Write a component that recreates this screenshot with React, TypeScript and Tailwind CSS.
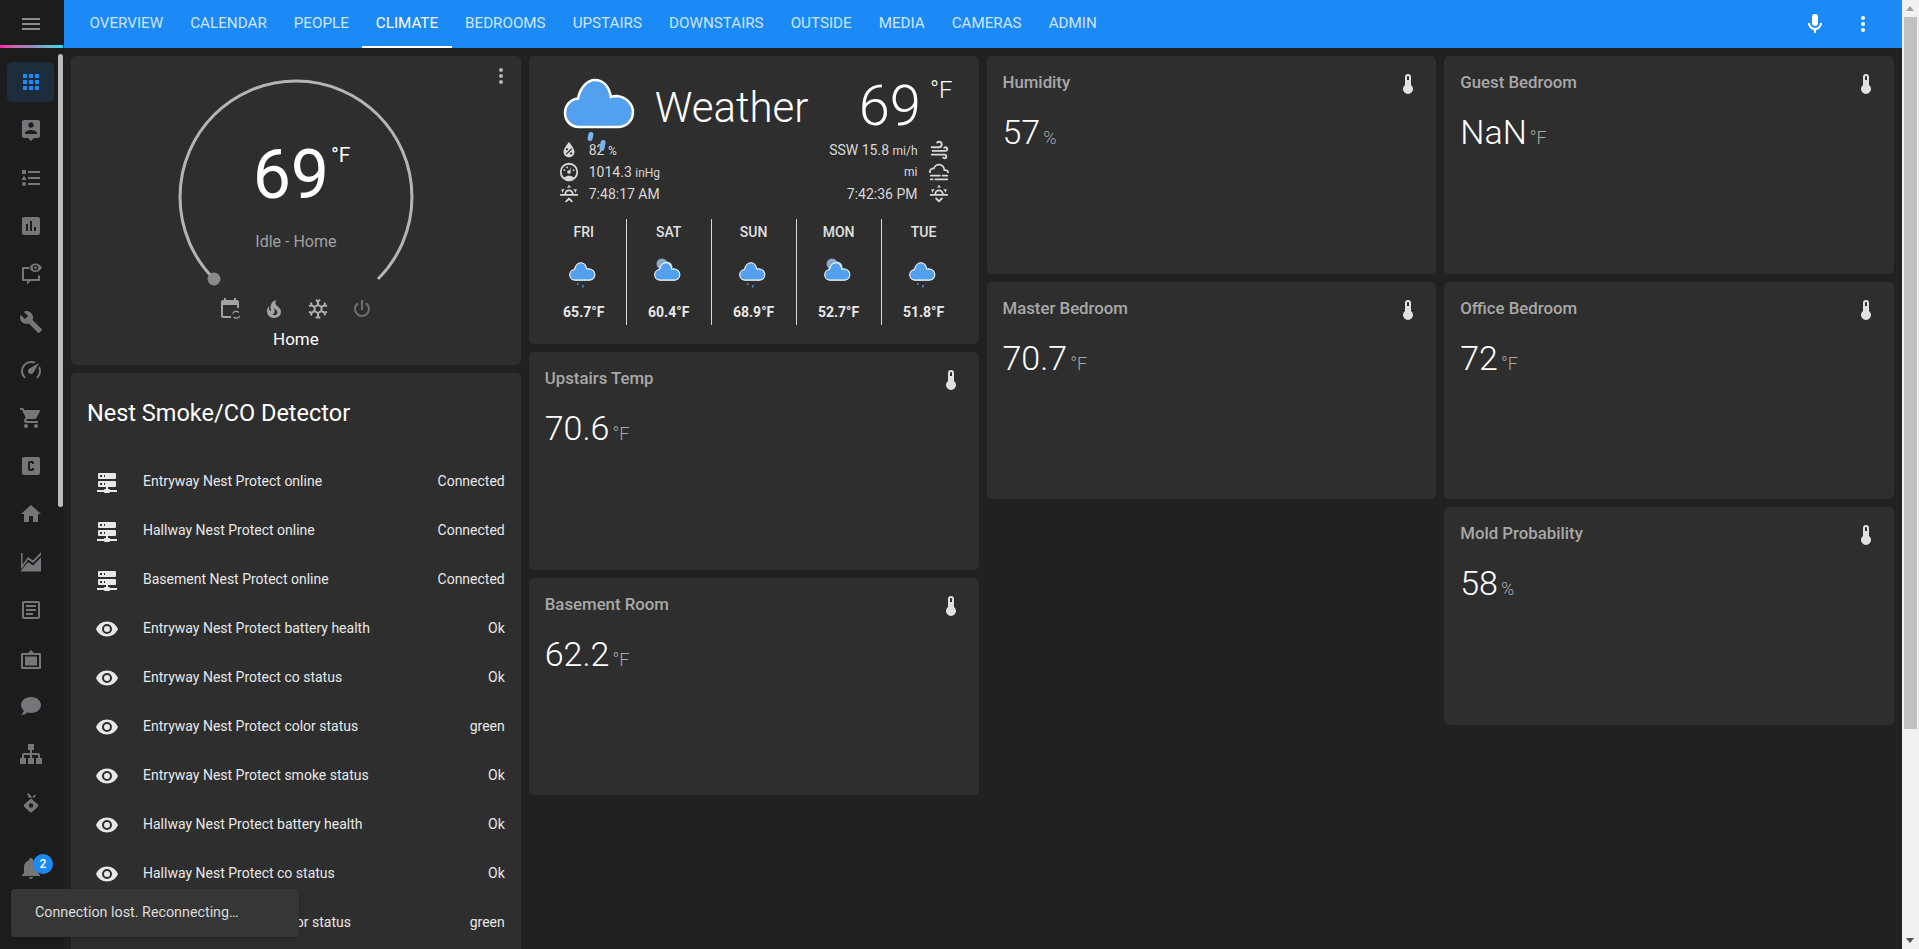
import React from 'react'

// Home Assistant climate dashboard
const P = {
  menu: 'M3,6H21V8H3V6M3,11H21V13H3V11M3,16H21V18H3V16Z',
  mic: 'M12,2A3,3 0 0,1 15,5V11A3,3 0 0,1 12,14A3,3 0 0,1 9,11V5A3,3 0 0,1 12,2M19,11C19,14.53 16.39,17.44 13,17.93V21H11V17.93C7.61,17.44 5,14.53 5,11H7A5,5 0 0,0 12,16A5,5 0 0,0 17,11H19Z',
  dots: 'M12,16A2,2 0 0,1 14,18A2,2 0 0,1 12,20A2,2 0 0,1 10,18A2,2 0 0,1 12,16M12,10A2,2 0 0,1 14,12A2,2 0 0,1 12,14A2,2 0 0,1 10,12A2,2 0 0,1 12,10M12,4A2,2 0 0,1 14,6A2,2 0 0,1 12,8A2,2 0 0,1 10,6A2,2 0 0,1 12,4Z',
  apps: 'M16,20H20V16H16M16,14H20V10H16M10,8H14V4H10M16,8H20V4H16M10,14H14V10H10M4,14H8V10H4M4,20H8V16H4M10,20H14V16H10M4,8H8V4H4V8Z',
  pin: 'M19 2H5C3.9 2 3 2.9 3 4V18C3 19.1 3.9 20 5 20H9L12 23L15 20H19C20.1 20 21 19.1 21 18V4C21 2.9 20.1 2 19 2M12 4.3C13.5 4.3 14.7 5.5 14.7 7C14.7 8.5 13.5 9.7 12 9.7C10.5 9.7 9.3 8.5 9.3 7C9.3 5.5 10.5 4.3 12 4.3M18 16H6V15.1C6 13.1 10 12 12 12C14 12 18 13.1 18 15.1V16Z',
  list: 'M5,9.5L7.5,14H2.5L5,9.5M3,4H7V8H3V4M5,20A2,2 0 0,0 7,18A2,2 0 0,0 5,16A2,2 0 0,0 3,18A2,2 0 0,0 5,20M9,5V7H21V5H9M9,19H21V17H9V19M9,13H21V11H9V13Z',
  poll: 'M17,17H15V13H17M13,17H11V7H13M9,17H7V10H9M19,3H5C3.89,3 3,3.89 3,5V19A2,2 0 0,0 5,21H19A2,2 0 0,0 21,19V5C21,3.89 20.1,3 19,3Z',
  msgEye: 'M11.5 5H4a1 1 0 0 0-1 1v12a1 1 0 0 0 1 1h4v3.5l3.5-3.5H20a1 1 0 0 0 1-1v-4.500h-2V17h-8.300L10 17.700V17H5V7h6.500zM16.500 1.500C13.600 1.500 11.300 3.300 10.200 5.800c1.100 2.500 3.400 4.300 6.300 4.300s5.200-1.800 6.300-4.300c-1.100-2.500-3.400-4.300-6.300-4.300zm0 1.600a2.700 2.700 0 1 1 0 5.400 2.700 2.700 0 0 1 0-5.400zm0 1.300a1.400 1.400 0 1 0 0 2.800 1.400 1.400 0 0 0 0-2.800z',
  wrench: 'M22.7,19L13.6,9.9C14.5,7.6 14,4.9 12.1,3C10.1,1 7.1,0.6 4.7,1.7L9,6L6,9L1.6,4.7C0.4,7.1 0.9,10.1 2.9,12.1C4.8,14 7.5,14.5 9.8,13.6L18.9,22.7C19.3,23.1 19.9,23.1 20.3,22.7L22.6,20.4C23.1,20 23.1,19.3 22.7,19Z',
  speed: 'M12,16A3,3 0 0,1 9,13C9,11.88 9.61,10.9 10.5,10.39L20.21,4.77L14.68,14.35C14.18,15.33 13.17,16 12,16M12,3C13.81,3 15.5,3.5 16.97,4.32L14.87,5.53C14,5.19 13,5 12,5A8,8 0 0,0 4,13C4,15.21 4.89,17.21 6.34,18.65H6.35C6.74,19.04 6.74,19.67 6.35,20.06C5.96,20.45 5.32,20.45 4.93,20.07V20.07C3.12,18.26 2,15.76 2,13A10,10 0 0,1 12,3M22,13C22,15.76 20.88,18.26 19.07,20.07V20.07C18.68,20.45 18.05,20.45 17.66,20.06C17.27,19.67 17.27,19.04 17.66,18.65V18.65C19.11,17.2 20,15.21 20,13C20,12 19.81,11 19.46,10.1L20.68,8C21.5,9.5 22,11.18 22,13Z',
  cart: 'M17,18C15.89,18 15,18.89 15,20A2,2 0 0,0 17,22A2,2 0 0,0 19,20C19,18.89 18.1,18 17,18M1,2V4H3L6.6,11.59L5.24,14.04C5.09,14.32 5,14.65 5,15A2,2 0 0,0 7,17H19V15H7.42A0.25,0.25 0 0,1 7.17,14.75C7.17,14.7 7.18,14.66 7.2,14.63L8.1,13H15.55C16.3,13 16.96,12.58 17.3,11.97L20.88,5.5C20.95,5.34 21,5.17 21,5A1,1 0 0,0 20,4H5.21L4.27,2M7,18C5.89,18 5,18.89 5,20A2,2 0 0,0 7,22A2,2 0 0,0 9,20C9,18.89 8.1,18 7,18Z',
  cbox: 'M5,3H19A2,2 0 0,1 21,5V19A2,2 0 0,1 19,21H5A2,2 0 0,1 3,19V5A2,2 0 0,1 5,3ZM11,7A2,2 0 0,0 9,9V15A2,2 0 0,0 11,17H13A2,2 0 0,0 15,15V14H13V15H11V9H13V10H15V9A2,2 0 0,0 13,7H11Z',
  home: 'M10,20V14H14V20H19V12H22L12,3L2,12H5V20H10Z',
  area: 'M2 3h1.500v11.500L9 7l5 3.500L22 2v3l-8 8-5-3.500-5.500 8L2 19zM2 21.500V20.500L9 12l5 3.500 8-8v14z',
  text: 'M5,3C3.89,3 3,3.89 3,5V19C3,20.11 3.89,21 5,21H19C20.11,21 21,20.11 21,19V5C21,3.89 20.11,3 19,3H5M5,5H19V19H5V5M7,7V9H17V7H7M7,11V13H17V11H7M7,15V17H14V15H7Z',
  tv: 'M3 7h6l3-3 3 3h6a1 1 0 0 1 1 1v14a1 1 0 0 1-1 1H3a1 1 0 0 1-1-1V8a1 1 0 0 1 1-1zM4 9v12h16V9zM6 10.500h12v9H6z',
  chat: 'M12,3C17.5,3 22,6.58 22,11C22,15.42 17.5,19 12,19C10.76,19 9.57,18.82 8.47,18.5C5.55,21 2,21 2,21C4.33,18.67 4.7,17.1 4.75,16.5C3.05,15.07 2,13.13 2,11C2,6.58 6.5,3 12,3Z',
  sitemap: 'M9,2V8H11V11H5C3.89,11 3,11.89 3,13V16H1V22H7V16H5V13H11V16H9V22H15V16H13V13H19V16H17V22H23V16H21V13C21,11.89 20.11,11 19,11H13V8H15V2H9Z',
  ornament: 'M12 8.500L18.500 14a2 2 0 0 1 0 3L13.200 22a2 2 0 0 1-2.400 0L5.500 17a2 2 0 0 1 0-3zM12 13.300a2.200 2.200 0 1 0 0 4.400 2.200 2.200 0 0 0 0-4.400zM8 2.500L12 5.500 13 8 9.500 7.500zM13.500 7c.4-1.200 1.400-2 3.500-2.300-.2 1.700-1.200 2.800-3 3z',
  bell: 'M21,19V20H3V19L5,17V11C5,7.9 7.03,5.17 10,4.29C10,4.19 10,4.1 10,4A2,2 0 0,1 12,2A2,2 0 0,1 14,4C14,4.1 14,4.19 14,4.29C16.97,5.17 19,7.9 19,11V17L21,19M14,21A2,2 0 0,1 12,23A2,2 0 0,1 10,21',
  thermo: 'M15 13V5A3 3 0 0 0 9 5V13A5 5 0 1 0 15 13M12 4A1 1 0 0 1 13 5V8H11V5A1 1 0 0 1 12 4Z',
  calendar: 'M19 3h-1V1h-2v2H8V1H6v2H5C3.9 3 3 3.9 3 5v14c0 1.100.9 2 2 2h8v-2H5V8h14v3h2V5c0-1.100-.9-2-2-2z',
  fire: 'M17.66 11.2C17.43 10.9 17.15 10.64 16.89 10.38C16.22 9.78 15.46 9.35 14.82 8.72C13.33 7.26 13 4.85 13.95 3C13 3.23 12.17 3.75 11.46 4.32C8.87 6.4 7.85 10.07 9.07 13.22C9.11 13.32 9.15 13.42 9.15 13.55C9.15 13.77 9 13.97 8.8 14.05C8.57 14.15 8.33 14.09 8.14 13.93C8.08 13.88 8.04 13.83 8 13.76C6.87 12.33 6.69 10.28 7.45 8.64C5.78 10 4.87 12.3 5 14.47C5.06 14.97 5.12 15.47 5.29 15.97C5.43 16.57 5.7 17.17 6 17.7C7.08 19.43 8.95 20.67 10.96 20.92C13.1 21.19 15.39 20.8 17.03 19.32C18.86 17.66 19.5 15 18.56 12.72L18.43 12.46C18.22 12 17.66 11.2 17.66 11.2M14.5 17.5C14.22 17.74 13.76 18 13.4 18.1C12.28 18.5 11.16 17.94 10.5 17.28C11.69 17 12.4 16.12 12.61 15.23C12.78 14.43 12.46 13.77 12.33 13C12.21 12.26 12.23 11.63 12.5 10.94C12.69 11.32 12.89 11.7 13.13 12C13.9 13 15.11 13.44 15.37 14.8C15.41 14.94 15.43 15.08 15.43 15.23C15.46 16.05 15.1 16.95 14.5 17.5H14.5Z',
  snow: 'M20.79,13.95L18.46,14.57L16.46,13.44V10.56L18.46,9.43L20.79,10.05L21.31,8.12L19.54,7.65L20,5.88L18.07,5.36L17.45,7.69L15.45,8.82L13,7.38V5.12L14.71,3.41L13.29,2L12,3.29L10.71,2L9.29,3.41L11,5.12V7.38L8.5,8.82L6.5,7.69L5.92,5.36L4,5.88L4.47,7.65L2.7,8.12L3.22,10.05L5.55,9.43L7.55,10.56V13.45L5.55,14.58L3.22,13.96L2.7,15.89L4.47,16.36L4,18.12L5.93,18.64L6.55,16.31L8.55,15.18L11,16.62V18.88L9.29,20.59L10.71,22L12,20.71L13.29,22L14.7,20.59L13,18.88V16.62L15.5,15.17L17.5,16.3L18.12,18.63L20,18.12L19.53,16.35L21.3,15.88L20.79,13.95M9.5,10.56L12,9.11L14.5,10.56V13.44L12,14.89L9.5,13.44V10.56Z',
  power: 'M16.56,5.44L15.11,6.89C16.84,7.94 18,9.83 18,12A6,6 0 0,1 12,18A6,6 0 0,1 6,12C6,9.83 7.16,7.94 8.88,6.88L7.44,5.44C5.36,6.88 4,9.28 4,12A8,8 0 0,0 12,20A8,8 0 0,0 20,12C20,9.28 18.64,6.88 16.56,5.44M13,3H11V13H13',
  server: 'M13,19H14A1,1 0 0,1 15,20H22V22H15A1,1 0 0,1 14,23H10A1,1 0 0,1 9,22H2V20H9A1,1 0 0,1 10,19H11V17H4A1,1 0 0,1 3,16V12A1,1 0 0,1 4,11H20A1,1 0 0,1 21,12V16A1,1 0 0,1 20,17H13V19M4,3H20A1,1 0 0,1 21,4V8A1,1 0 0,1 20,9H4A1,1 0 0,1 3,8V4A1,1 0 0,1 4,3M9,7H10V5H9V7M9,15H10V13H9V15M5,5V7H7V5H5M5,13V15H7V13H5Z',
  eye: 'M12,9A3,3 0 0,0 9,12A3,3 0 0,0 12,15A3,3 0 0,0 15,12A3,3 0 0,0 12,9M12,17A5,5 0 0,1 7,12A5,5 0 0,1 12,7A5,5 0 0,1 17,12A5,5 0 0,1 12,17M12,4.5C7,4.5 2.73,7.61 1,12C2.73,16.39 7,19.5 12,19.5C17,19.5 21.27,16.39 23,12C21.27,7.61 17,4.5 12,4.5Z',
  water: 'M12,3.25C12,3.25 6,10 6,14C6,17.32 8.69,20 12,20A6,6 0 0,0 18,14C18,10 12,3.25 12,3.25M14.47,9.97L15.53,11.03L9.53,17.03L8.47,15.97M9.75,10A1.25,1.25 0 0,1 11,11.25A1.25,1.25 0 0,1 9.75,12.5A1.25,1.25 0 0,1 8.5,11.25A1.25,1.25 0 0,1 9.75,10M14.25,14.5A1.25,1.25 0 0,1 15.5,15.75A1.25,1.25 0 0,1 14.25,17A1.25,1.25 0 0,1 13,15.75A1.25,1.25 0 0,1 14.25,14.5Z',
  gauge: 'M17.3,18C19,16.5 20,14.4 20,12A8,8 0 0,0 12,4A8,8 0 0,0 4,12C4,14.4 5,16.5 6.7,18C8.2,16.7 10,16 12,16C14,16 15.9,16.7 17.3,18M12,2A10,10 0 0,1 22,12A10,10 0 0,1 12,22A10,10 0 0,1 2,12A10,10 0 0,1 12,2M7,9A1,1 0 0,1 8,10A1,1 0 0,1 7,11A1,1 0 0,1 6,10A1,1 0 0,1 7,9M10,6A1,1 0 0,1 11,7A1,1 0 0,1 10,8A1,1 0 0,1 9,7A1,1 0 0,1 10,6M17,9A1,1 0 0,1 18,10A1,1 0 0,1 17,11A1,1 0 0,1 16,10A1,1 0 0,1 17,9M14.4,6.1L13.6,10.8C13.8,11.1 14,11.5 14,12A2,2 0 0,1 12,14A2,2 0 0,1 10,12A2,2 0 0,1 12,10C12.2,10 12.5,10 12.7,10.1Z',
  sunUp: 'M3,12H7A5,5 0 0,1 12,7A5,5 0 0,1 17,12H21A1,1 0 0,1 22,13A1,1 0 0,1 21,14H3A1,1 0 0,1 2,13A1,1 0 0,1 3,12M15,12A3,3 0 0,0 12,9A3,3 0 0,0 9,12H15M12,2L14.39,5.42C13.65,5.15 12.84,5 12,5C11.16,5 10.35,5.15 9.61,5.42L12,2M3.34,7L7.5,6.65C6.9,7.16 6.36,7.78 5.94,8.5C5.5,9.24 5.25,10 5.11,10.79L3.34,7M20.65,7L18.88,10.79C18.74,10 18.47,9.23 18.05,8.5C17.63,7.78 17.1,7.15 16.5,6.64L20.65,7M12.71,16.3L15.82,19.41C16.21,19.8 16.21,20.43 15.82,20.82C15.43,21.21 14.8,21.21 14.41,20.82L12,18.41L9.59,20.82C9.2,21.21 8.57,21.21 8.18,20.82C7.79,20.43 7.79,19.8 8.18,19.41L11.29,16.3C11.5,16.1 11.74,16 12,16C12.26,16 12.5,16.1 12.71,16.3Z',
  sunDown: 'M3,12H7A5,5 0 0,1 12,7A5,5 0 0,1 17,12H21A1,1 0 0,1 22,13A1,1 0 0,1 21,14H3A1,1 0 0,1 2,13A1,1 0 0,1 3,12M15,12A3,3 0 0,0 12,9A3,3 0 0,0 9,12H15M12,2L14.39,5.42C13.65,5.15 12.84,5 12,5C11.16,5 10.35,5.15 9.61,5.42L12,2M3.34,7L7.5,6.65C6.9,7.16 6.36,7.78 5.94,8.5C5.5,9.24 5.25,10 5.11,10.79L3.34,7M20.65,7L18.88,10.79C18.74,10 18.47,9.23 18.05,8.5C17.63,7.78 17.1,7.15 16.5,6.64L20.65,7M12.71,20.71L15.82,17.6C16.21,17.21 16.21,16.57 15.82,16.18C15.43,15.79 14.8,15.79 14.41,16.18L12,18.59L9.59,16.18C9.2,15.79 8.57,15.79 8.18,16.18C7.79,16.57 7.79,17.21 8.18,17.6L11.29,20.71C11.5,20.9 11.74,21 12,21C12.26,21 12.5,20.9 12.71,20.71Z',
  windy: 'M4,10A1,1 0 0,1 3,9A1,1 0 0,1 4,8H12A2,2 0 0,0 14,6A2,2 0 0,0 12,4C11.45,4 10.95,4.22 10.59,4.59C10.2,5 9.56,5 9.17,4.59C8.78,4.2 8.78,3.56 9.17,3.17C9.9,2.45 10.9,2 12,2A4,4 0 0,1 16,6A4,4 0 0,1 12,10H4M19,12A1,1 0 0,0 20,11A1,1 0 0,0 19,10C18.72,10 18.47,10.11 18.29,10.29C17.9,10.68 17.27,10.68 16.88,10.29C16.5,9.9 16.5,9.27 16.88,8.88C17.42,8.34 18.17,8 19,8A3,3 0 0,1 22,11A3,3 0 0,1 19,14H5A1,1 0 0,1 4,13A1,1 0 0,1 5,12H19M18,18H4A1,1 0 0,1 3,17A1,1 0 0,1 4,16H18A3,3 0 0,1 21,19A3,3 0 0,1 18,22C17.17,22 16.42,21.66 15.88,21.12C15.5,20.73 15.5,20.1 15.88,19.71C16.27,19.32 16.9,19.32 17.29,19.71C17.47,19.89 17.72,20 18,20A1,1 0 0,0 19,19A1,1 0 0,0 18,18Z',
  fog: 'M3,15H13A1,1 0 0,1 14,16A1,1 0 0,1 13,17H3A1,1 0 0,1 2,16A1,1 0 0,1 3,15M16,15H21A1,1 0 0,1 22,16A1,1 0 0,1 21,17H16A1,1 0 0,1 15,16A1,1 0 0,1 16,15M1,12A5,5 0 0,1 6,7C7,4.65 9.3,3 12,3C15.43,3 18.24,5.66 18.5,9.03L19,9C21.19,9 22.97,10.76 23,13H21A2,2 0 0,0 19,11H17V10A5,5 0 0,0 12,5C9.5,5 7.45,6.82 7.06,9.19C6.73,9.07 6.37,9 6,9A3,3 0 0,0 3,12C3,12.35 3.06,12.69 3.17,13H1.1L1,12M3,19H5A1,1 0 0,1 6,20A1,1 0 0,1 5,21H3A1,1 0 0,1 2,20A1,1 0 0,1 3,19M8,19H21A1,1 0 0,1 22,20A1,1 0 0,1 21,21H8A1,1 0 0,1 7,20A1,1 0 0,1 8,19Z',
}

const CLOUD = 'M16 49C8 49 2 43 2 35C2 27 8 21 15 20.500C17 10 24 2 32 2C40 2 46 8 48 19C50 18 52 18 54 18C63 19 70 26 70 34C70 43 63 49 55 49Z'

const Icon = ({ d, className = '' }: { d: string; className?: string }) => (
  <svg viewBox="0 0 24 24" fill="currentColor" fillRule="evenodd" className={`shrink-0 ${className || 'w-6 h-6'}`}>
    <path d={d} />
  </svg>
)

const tabs = ['Overview', 'Calendar', 'People', 'Climate', 'Bedrooms', 'Upstairs', 'Downstairs', 'Outside', 'Media', 'Cameras', 'Admin']

const sideIcons = [P.pin, P.list, P.poll, P.msgEye, P.wrench, P.speed, P.cart, P.cbox, P.home, P.area, P.text, P.tv, P.chat, P.sitemap, P.ornament]

const nestRows = [
  ['server', 'Entryway Nest Protect online', 'Connected'],
  ['server', 'Hallway Nest Protect online', 'Connected'],
  ['server', 'Basement Nest Protect online', 'Connected'],
  ['eye', 'Entryway Nest Protect battery health', 'Ok'],
  ['eye', 'Entryway Nest Protect co status', 'Ok'],
  ['eye', 'Entryway Nest Protect color status', 'green'],
  ['eye', 'Entryway Nest Protect smoke status', 'Ok'],
  ['eye', 'Hallway Nest Protect battery health', 'Ok'],
  ['eye', 'Hallway Nest Protect co status', 'Ok'],
  ['eye', 'Hallway Nest Protect color status', 'green'],
]

const forecast = [
  { day: 'FRI', temp: '65.7', sun: false },
  { day: 'SAT', temp: '60.4', sun: true },
  { day: 'SUN', temp: '68.9', sun: false },
  { day: 'MON', temp: '52.7', sun: true },
  { day: 'TUE', temp: '51.8', sun: false },
]

function Sidebar() {
  return (
    <aside className="relative w-16 shrink-0 h-full bg-[#1c1c1c] flex flex-col">
      <div className="relative h-12 shrink-0 flex items-center justify-center pr-[2px] text-[#8c8c8c]">
        <Icon d={P.menu} />
        <div className="absolute left-0 bottom-0 w-[63px] h-[3px] bg-linear-to-r from-[#f01fa4] via-[#8f8dbd] to-[#17dbe6]" />
      </div>
      <div className="flex flex-col gap-2 pt-[14px] pl-[7px] w-[54px]">
        <div className="h-10 w-[47px] rounded-[5px] bg-[#1d2c3b] flex items-center justify-center text-[#1b8af7]">
          <Icon d={P.apps} />
        </div>
        {sideIcons.map((d, i) => (
          <div key={i} className="h-10 w-[47px] flex items-center justify-center text-[#75767a]">
            <Icon d={d} />
          </div>
        ))}
        <div className="relative h-10 w-[47px] mt-[18px] flex items-center justify-center text-[#75767a]">
          <Icon d={P.bell} />
          <div className="absolute left-[26px] top-[6px] w-5 h-5 rounded-full bg-[#1b8af7] text-white text-[12px] font-medium flex items-center justify-center">2</div>
        </div>
      </div>
      {/* sidebar's own scrollbar */}
      <div className="absolute left-[58px] top-[54px] w-[5px] h-[453px] rounded-[3px] bg-[#bdbdbd]" />
    </aside>
  )
}

function Toolbar() {
  return (
    <header className="h-12 shrink-0 bg-[#1b8af7] flex items-center pl-3 pr-[27px]">
      <nav className="flex h-full">
        {tabs.map(t => (
          <div
            key={t}
            className={`relative h-full flex items-center px-[13.500px] pb-[2px] text-[15.200px] uppercase ${t === 'Climate' ? 'text-white' : 'text-[#cfe5fd]'}`}
          >
            {t}
            {t === 'Climate' && <div className="absolute left-0 right-0 bottom-0 h-[2px] bg-white" />}
          </div>
        ))}
      </nav>
      <div className="ml-auto flex items-center gap-6 text-white">
        <Icon d={P.mic} />
        <Icon d={P.dots} />
      </div>
    </header>
  )
}

function Thermostat() {
  return (
    <section className="relative h-[309px] rounded-[5px] bg-[#2e2e2e] flex flex-col items-center pt-[21px]">
      <div className="absolute right-2 top-2 text-[#b5b5b5]">
        <Icon d={P.dots} />
      </div>
      <div className="relative w-[240px] h-[212px]">
        <svg viewBox="0 0 240 212" fill="none" className="w-[240px] h-[212px]">
          <path d="M38 202A116 116 0 1 1 202 202" stroke="#b4b4b4" strokeWidth="3" />
          <circle cx="38" cy="202" r="6.500" fill="#8a8a8a" />
        </svg>
        <div className="absolute left-0 right-0 top-[58px] flex justify-center text-white">
          <span className="text-[68px] leading-[80px] ml-[-10px]">69</span>
          <span className="text-[21px] leading-[24px] mt-[8px] absolute left-[155px]">°F</span>
        </div>
        <div className="absolute left-0 right-0 top-[154px] text-center text-[16px] leading-[22px] text-[#a0a0a0]">Idle - Home</div>
      </div>
      <div className="flex gap-5 mt-2 text-[#a3a3a3]">
        <svg viewBox="0 0 24 24" fill="currentColor" className="w-6 h-6">
          <path d={P.calendar} />
          <path d="M14.800 16.500a3.600 3.600 0 0 1 6-1M21.700 19a3.600 3.600 0 0 1-6 1" fill="none" stroke="currentColor" strokeWidth="1.200" />
        </svg>
        <Icon d={P.fire} />
        <Icon d={P.snow} className="w-6 h-6 text-[#b0b0b0]" />
        <Icon d={P.power} className="w-6 h-6 text-[#6e6e6e]" />
      </div>
      <div className="mt-[6px] text-[17px] leading-6 text-white">Home</div>
    </section>
  )
}

function NestCard() {
  return (
    <section className="rounded-[5px] bg-[#2e2e2e] pt-[24px] px-4 pb-4 flex-1">
      <h2 className="text-[23.500px] leading-8 text-white">Nest Smoke/CO Detector</h2>
      <div className="mt-[28px]">
        {nestRows.map(([icon, label, value]) => (
          <div key={label} className="h-[49px] flex items-center text-[14px] text-[#e8e8e8]">
            <Icon d={icon === 'server' ? P.server : P.eye} className="w-6 h-6 ml-2" />
            <span className="ml-6">{label}</span>
            <span className="ml-auto">{value}</span>
          </div>
        ))}
      </div>
    </section>
  )
}

function MiniCloud({ sun }: { sun: boolean }) {
  return (
    <svg viewBox="0 0 34 34" className="w-[34px] h-[34px] ml-[-4px]">
      {sun && (
        <>
          <circle cx="12" cy="6" r="5.500" fill="#8aa9cb" />
          <circle cx="17" cy="9" r="5.500" fill="#a8c6e6" />
        </>
      )}
      <g transform="translate(4 4) scale(0.37)">
        <path d={CLOUD} fill="#52a0ee" stroke="#fff" strokeWidth="2.800" />
      </g>
      {!sun && (
        <>
          <path d="M13 25l-.3 2" stroke="#52a0ee" strokeWidth="1.200" />
          <path d="M18 27l-.3 2.500" stroke="#52a0ee" strokeWidth="1.200" />
        </>
      )}
    </svg>
  )
}

function Weather() {
  return (
    <section className="relative h-[288px] rounded-[5px] bg-[#2e2e2e] px-[13px] pt-[22px] text-[#d8d8d8]">
      <div className="flex items-start">
        <svg viewBox="0 0 72 51" fill="none" className="w-[72px] h-[51px] ml-[21px] shrink-0">
          <path d={CLOUD} fill="#52a0ee" stroke="#fff" strokeWidth="2.500" />
        </svg>
        <div className="ml-[20px] mt-[3px] text-[42px] leading-[54px] font-light text-white">Weather</div>
        <div className="ml-auto mr-[13px] mt-[-8px] flex items-start font-light text-white">
          <span className="text-[56px] leading-[72px]">69</span>
          <span className="text-[24px] leading-[28px] mt-[6px] ml-[9px]">°F</span>
        </div>
      </div>
      {/* raindrops fall over the readings */}
      <div className="absolute left-[59px] top-[76px] w-[5px] h-[9px] rounded-full bg-[#7ab4f2] rotate-12" />
      <div className="absolute left-[71px] top-[84px] w-[5px] h-[11px] rounded-full bg-[#7ab4f2] rotate-12" />
      <div className="flex justify-between mt-[-3px]">
        <div className="flex flex-col ml-4 text-[14px]">
          <div className="h-[22px] flex items-center">
            <Icon d={P.water} className="w-[22px] h-[22px]" />
            <span className="ml-[9px]">82 <span className="text-[12px]">%</span></span>
          </div>
          <div className="h-[22px] flex items-center">
            <Icon d={P.gauge} className="w-[22px] h-[22px]" />
            <span className="ml-[9px]">1014.3 <span className="text-[12px]">inHg</span></span>
          </div>
          <div className="h-[22px] flex items-center">
            <Icon d={P.sunUp} className="w-[22px] h-[22px]" />
            <span className="ml-[9px]">7:48:17 AM</span>
          </div>
        </div>
        <div className="flex flex-col items-end mr-4 text-[14px]">
          <div className="h-[22px] flex items-center">
            <span>SSW 15.8 <span className="text-[12px]">mi/h</span></span>
            <Icon d={P.windy} className="w-[22px] h-[22px] ml-[10px]" />
          </div>
          <div className="h-[22px] flex items-center">
            <span className="text-[12px]">mi</span>
            <Icon d={P.fog} className="w-[22px] h-[22px] ml-[10px]" />
          </div>
          <div className="h-[22px] flex items-center">
            <span>7:42:36 PM</span>
            <Icon d={P.sunDown} className="w-[22px] h-[22px] ml-[10px]" />
          </div>
        </div>
      </div>
      <div className="flex mt-[14px] h-[106px]">
        {forecast.map((f, i) => (
          <div key={f.day} className={`flex-1 flex flex-col items-center pt-[3px] ${i < 4 ? 'border-r border-[#d8d8d8]' : ''}`}>
            <div className="text-[14px] leading-5 font-medium text-[#e1e1e1]">{f.day}</div>
            <div className="mt-[16px] h-[38px]"><MiniCloud sun={f.sun} /></div>
            <div className="mt-[6px] text-[14px] leading-5 font-bold text-[#e8e8e8]">{f.temp}°F</div>
          </div>
        ))}
      </div>
    </section>
  )
}

function Sensor({ name, value, unit }: { name: string; value: string; unit: string }) {
  return (
    <section className="relative h-[217.500px] rounded-[5px] bg-[#2e2e2e] px-4 pt-4">
      <div className="flex items-start justify-between">
        <span className="text-[16.800px] leading-5 font-medium text-[#a8a8a8]">{name}</span>
        <Icon d={P.thermo} className="w-6 h-6 text-[#e1e1e1]" />
      </div>
      <div className="mt-[12px] flex items-baseline text-white">
        <span className="text-[34px] leading-[48px] font-light">{value}</span>
        <span className="ml-[3px] text-[18px] font-light text-[#a8a8a8]">{unit}</span>
      </div>
    </section>
  )
}

export default function App() {
  return (
    <div className="relative w-full h-screen flex overflow-hidden bg-[#212121] font-[Roboto,sans-serif]">
      <Sidebar />
      <div className="flex-1 min-w-0 flex flex-col">
        <Toolbar />
        <main className="flex-1 min-h-0 overflow-hidden grid grid-cols-4 gap-2 items-start pl-[7px] pr-2 pt-2">
          <div className="flex flex-col gap-2">
            <Thermostat />
            <NestCard />
          </div>
          <div className="flex flex-col gap-2">
            <Weather />
            <Sensor name="Upstairs Temp" value="70.6" unit="°F" />
            <Sensor name="Basement Room" value="62.2" unit="°F" />
          </div>
          <div className="flex flex-col gap-2">
            <Sensor name="Humidity" value="57" unit="%" />
            <Sensor name="Master Bedroom" value="70.7" unit="°F" />
          </div>
          <div className="flex flex-col gap-2">
            <Sensor name="Guest Bedroom" value="NaN" unit="°F" />
            <Sensor name="Office Bedroom" value="72" unit="°F" />
            <Sensor name="Mold Probability" value="58" unit="%" />
          </div>
        </main>
      </div>
      {/* page scrollbar */}
      <div className="relative w-[17px] shrink-0 h-full bg-[#f1f1f1]">
        <div className="absolute left-[2px] top-[17px] h-[712px] w-[13px] bg-[#c1c1c1]" />
        <div className="absolute left-[4px] top-[6px] w-0 h-0 border-x-[4px] border-x-transparent border-b-[5px] border-b-[#a3a3a3]" />
        <div className="absolute left-[4px] bottom-[6px] w-0 h-0 border-x-[4px] border-x-transparent border-t-[5px] border-t-[#505050]" />
      </div>
      <div className="absolute left-[11px] top-[889px] w-[288px] h-12 rounded-[4px] bg-[#363636] flex items-center pl-6 text-[14.300px] text-[#dcdcdc] shadow-md">
        Connection lost. Reconnecting…
      </div>
    </div>
  )
}
